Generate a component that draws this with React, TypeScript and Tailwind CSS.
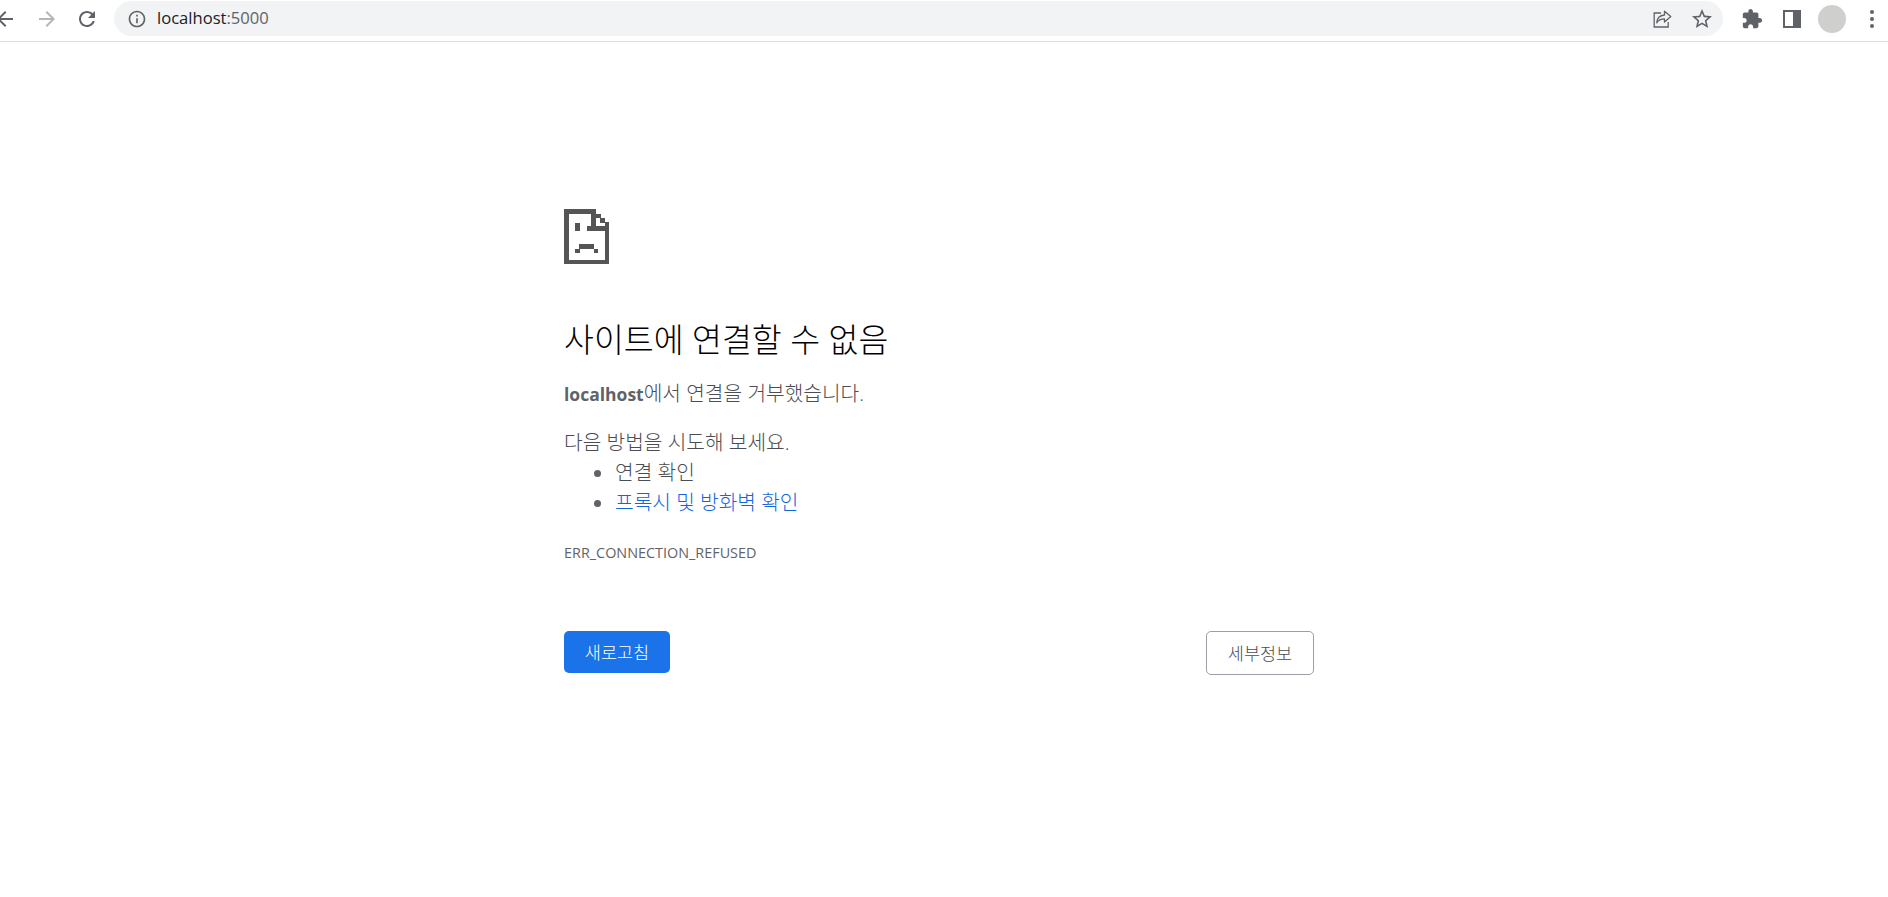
import type { ReactNode } from 'react';

const FONT = 'font-["Open_Sans","Noto_Sans_CJK_KR",sans-serif]';

function ToolIcon({ d, color = '#5f6368', size = 24 }: { d: string; color?: string; size?: number }) {
  return (
    <svg width={size} height={size} viewBox="0 0 24 24" fill={color}>
      <path d={d} />
    </svg>
  );
}

function ToolButton({ children }: { children: ReactNode }) {
  return <div className="flex h-[36px] w-[40px] shrink-0 items-center justify-center">{children}</div>;
}

const ARROW_BACK = 'M20 11H7.83l5.59-5.59L12 4l-8 8 8 8 1.41-1.41L7.83 13H20v-2z';
const ARROW_FORWARD = 'M4 11h12.17l-5.59-5.59L12 4l8 8-8 8-1.41-1.41L16.17 13H4v-2z';
const REFRESH =
  'M17.65 6.35C16.2 4.9 14.21 4 12 4c-4.42 0-7.99 3.58-7.99 8s3.57 8 7.99 8c3.73 0 6.84-2.55 7.73-6h-2.08c-.82 2.33-3.04 4-5.65 4-3.31 0-6-2.69-6-6s2.69-6 6-6c1.66 0 3.14.69 4.22 1.78L13 11h7V4l-2.35 2.35z';
const INFO =
  'M11 7h2v2h-2zm0 4h2v6h-2zm1-9C6.48 2 2 6.48 2 12s4.48 10 10 10 10-4.48 10-10S17.52 2 12 2zm0 18c-4.41 0-8-3.59-8-8s3.59-8 8-8 8 3.59 8 8-3.59 8-8 8z';
const STAR =
  'M22 9.24l-7.19-.62L12 2 9.19 8.63 2 9.24l5.46 4.73L5.82 21 12 17.27 18.18 21l-1.63-7.03L22 9.24zM12 15.4l-3.76 2.27 1-4.28-3.32-2.88 4.38-.38L12 6.1l1.71 4.04 4.38.38-3.32 2.88 1 4.28L12 15.4z';
const EXTENSION =
  'M20.5 11H19V7c0-1.1-.9-2-2-2h-4V3.5C13 2.12 11.88 1 10.5 1S8 2.12 8 3.5V5H4c-1.1 0-1.99.9-1.99 2v3.8H3.5c1.49 0 2.7 1.21 2.7 2.7s-1.21 2.7-2.7 2.7H2V20c0 1.1.9 2 2 2h3.8v-1.5c0-1.49 1.21-2.7 2.7-2.7 1.49 0 2.7 1.21 2.7 2.7V22H17c1.1 0 2-.9 2-2v-4h1.5c1.38 0 2.5-1.12 2.5-2.5S21.88 11 20.5 11z';

function ShareIcon() {
  return (
    <svg width="22" height="22" viewBox="0 0 22 22" fill="none" stroke="#5f6368" strokeWidth="1.3">
      <path d="M10 5H3.2v14h14v-5" />
      <path d="M13.5 3.2 19.8 8.6l-6.3 5.4v-3.2c-3.6 0-6 1-7.8 4 .3-4.6 3-7.4 7.8-7.8z" strokeLinejoin="round" />
    </svg>
  );
}

function SidePanelIcon() {
  return (
    <svg width="18" height="18" viewBox="0 0 18 18">
      <path fillRule="evenodd" fill="#5f6368" d="M0 0h18v18H0zM2 2v14h8V2z" />
    </svg>
  );
}

function SadTab() {
  return (
    <svg width="45" height="55" viewBox="0 0 45 55" fill="#555555" shapeRendering="crispEdges">
      <rect x="0" y="0" width="32" height="4.5" />
      <rect x="0" y="0" width="4.5" height="55" />
      <rect x="0" y="50.5" width="45" height="4.5" />
      <rect x="40.5" y="13" width="4.5" height="42" />
      <rect x="27" y="0" width="4.5" height="21.5" />
      <rect x="23" y="17" width="22" height="4.5" />
      <rect x="32" y="4.5" width="4.5" height="4.5" />
      <rect x="36" y="9" width="4.5" height="4.5" />
      <rect x="11" y="13.5" width="4.5" height="8.5" />
      <rect x="15" y="35" width="14.5" height="4.5" />
      <rect x="11" y="39.5" width="4.5" height="4.5" />
      <rect x="29.5" y="39.5" width="4.5" height="4.5" />
    </svg>
  );
}

export default function App() {
  return (
    <div className={`h-screen w-full overflow-hidden bg-white ${FONT}`}>
      {/* Browser toolbar */}
      <div className="flex h-[42px] items-start border-b border-[#dadce0] pt-px">
        <div className="ml-[-15px] flex">
          <ToolButton>
            <ToolIcon d={ARROW_BACK} />
          </ToolButton>
          <div className="ml-[2px]">
            <ToolButton>
              <ToolIcon d={ARROW_FORWARD} color="#b4b6b8" />
            </ToolButton>
          </div>
          <ToolButton>
            <ToolIcon d={REFRESH} />
          </ToolButton>
        </div>
        <div className="ml-[7px] flex h-[35px] w-[1609px] shrink-0 items-center rounded-full bg-[#f1f3f4]">
          <div className="ml-[13px] flex">
            <ToolIcon d={INFO} size={20} />
          </div>
          <div className="ml-[10px] text-[16.6px] leading-none text-[#202124]">
            localhost<span className="text-[#5f6368]">:5000</span>
          </div>
          <div className="ml-auto mr-[1px] flex">
            <ToolButton>
              <ShareIcon />
            </ToolButton>
            <ToolButton>
              <ToolIcon d={STAR} />
            </ToolButton>
          </div>
        </div>
        <div className="ml-[9px] flex">
          <ToolButton>
            <ToolIcon d={EXTENSION} size={22} />
          </ToolButton>
          <ToolButton>
            <SidePanelIcon />
          </ToolButton>
          <ToolButton>
            <div className="h-[28px] w-[28px] rounded-full bg-[#cfcfcd]" />
          </ToolButton>
          <ToolButton>
            <div className="flex flex-col gap-[3px]">
              <div className="h-[4px] w-[4px] rounded-full bg-[#5f6368]" />
              <div className="h-[4px] w-[4px] rounded-full bg-[#5f6368]" />
              <div className="h-[4px] w-[4px] rounded-full bg-[#5f6368]" />
            </div>
          </ToolButton>
        </div>
      </div>

      {/* Error page */}
      <div className="ml-[564px] w-[750px] pt-[167px]">
        <SadTab />
        <h1 className="mt-[56px] text-[32.5px] leading-[40px] font-light text-[#000000]">사이트에 연결할 수 없음</h1>
        <p className="mt-[18px] text-[20.25px] leading-[30px] font-light text-[#4a4d51]">
          <strong className="text-[17.5px] font-bold text-[#5f6368]">localhost</strong>에서 연결을 거부했습니다.
        </p>
        <p className="mt-[18px] text-[20.25px] leading-[30px] font-light text-[#4a4d51]">다음 방법을 시도해 보세요.</p>
        <ul className="list-disc pl-[51px] text-[20.25px] leading-[30px] font-light text-[#4a4d51] marker:text-[#5f6368]">
          <li>연결 확인</li>
          <li>
            <span className="text-[#0f66e0]">프록시 및 방화벽 확인</span>
          </li>
        </ul>
        <div className="mt-[24px] text-[14.4px] leading-[24px] text-[#5f6368]">ERR_CONNECTION_REFUSED</div>
        <div className="mt-[66px] flex items-start justify-between">
          <button className="flex h-[42px] w-[106px] items-center justify-center rounded-[5px] bg-[#1a73e8] text-[17.5px] font-light text-white">
            새로고침
          </button>
          <button className="flex h-[44px] w-[108px] items-center justify-center rounded-[5px] border border-[#9aa0a6] bg-white text-[17.5px] font-light text-[#4a4d51]">
            세부정보
          </button>
        </div>
      </div>
    </div>
  );
}
